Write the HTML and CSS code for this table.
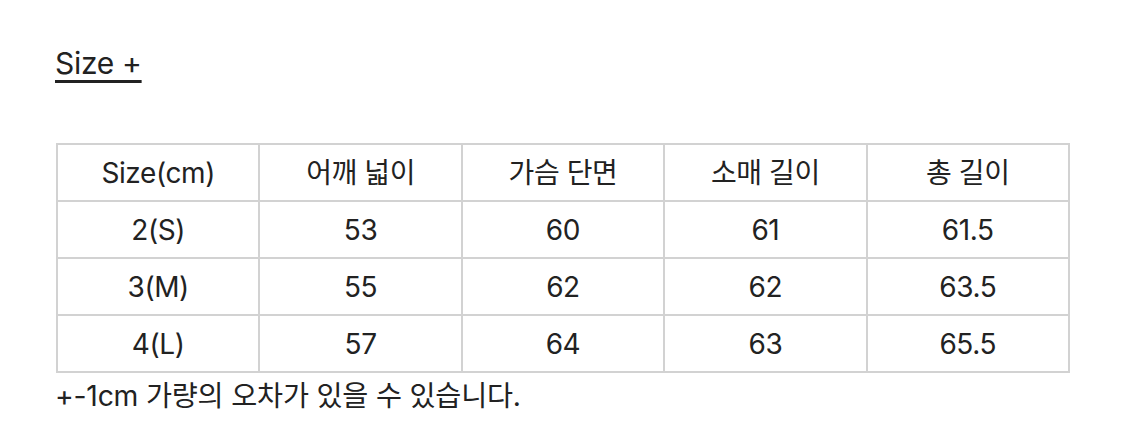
FILE: index.html
```html
<!DOCTYPE html>
<html lang="ko">
<head>
<meta charset="utf-8">
<link rel="stylesheet" href="styles.css">
</head>
<body>
<div class="page">
  <h2 class="title">Size +</h2>
  <table class="size-table">
    <tr><td>Size(cm)</td><td>어깨 넓이</td><td>가슴 단면</td><td>소매 길이</td><td>총 길이</td></tr>
    <tr><td>2(S)</td><td>53</td><td>60</td><td>61</td><td>61.5</td></tr>
    <tr><td>3(M)</td><td>55</td><td>62</td><td>62</td><td>63.5</td></tr>
    <tr><td>4(L)</td><td>57</td><td>64</td><td>63</td><td>65.5</td></tr>
  </table>
  <p class="note">+-1cm 가량의 오차가 있을 수 있습니다.</p>
</div>
</body>
</html>
```
FILE: styles.css
```css
html, body {
  margin: 0;
  padding: 0;
  background: #fff;
}
.page {
  padding: 44px 56px 0 55px;
  font-family: Inter, "Noto Sans CJK KR", sans-serif;
  color: #222;
}
.title {
  margin: 0 0 61px 0;
  font-size: 30px;
  font-weight: 400;
  line-height: 38px;
  letter-spacing: -0.3px;
  text-decoration: underline;
  text-decoration-thickness: 3px;
  text-underline-offset: 6px;
}
.size-table {
  width: 1014px;
  border-collapse: collapse;
  table-layout: fixed;
  margin-left: 1px;
}
.size-table td {
  border: 2px solid #d2d2d2;
  height: 55px;
  padding: 0;
  text-align: center;
  font-size: 28px;
  line-height: 30px;
  letter-spacing: -0.4px;
}
.note {
  margin: 7px 0 0 0;
  font-size: 28.3px;
  line-height: 32px;
  letter-spacing: -0.2px;
}
```
